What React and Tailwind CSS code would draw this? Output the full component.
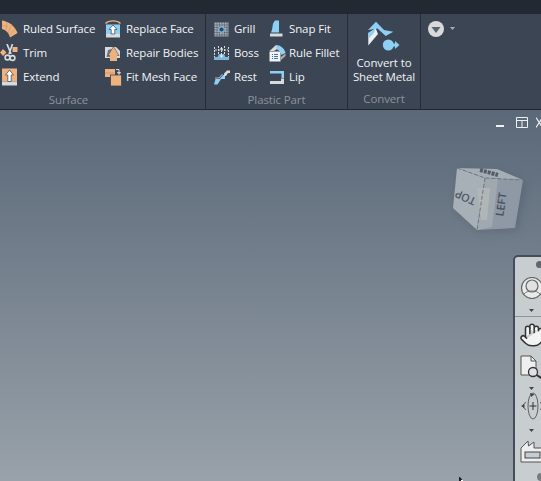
import { Hand } from "lucide-react";

function Item({ icon, label, wide }) {
  return (
    <div className="flex items-center h-6">
      <span className={`${wide ? "w-[23px]" : "w-[21px]"} h-5 shrink-0 flex items-center`}>{icon}</span>
      <span className="whitespace-nowrap">{label}</span>
    </div>
  );
}
function ItemP({ icon, label }) {
  return (
    <div className="flex items-center h-6">
      <span className="w-[20px] h-5 shrink-0 flex items-center">{icon}</span>
      <span className="whitespace-nowrap">{label}</span>
    </div>
  );
}

const O = "#eeb27f";
const B = "#8ed0f5";
const W = "#d8dadc";
const G = "#aab0b5";

const Ruled = () => (
  <svg width="18" height="18" viewBox="0 0 18 18">
    <path d="M2 0.500 C9 1.500 15 6 17.500 13 L10 17.500 C9 13 6 10 2 9 Z" fill={O} />
    <path d="M2 5L8 7M7 2L6 10M12 4L8 13M15 9L10 15" stroke="#c89468" fill="none" strokeWidth="0.6" />
  </svg>
);
const Trim = () => (
  <svg width="18" height="18" viewBox="0 0 18 18">
    <path d="M3 5l3.500 3.500-3.500 3.500-3-3.500z" fill={O} />
    <rect x="12.500" y="3" width="5" height="5" fill={O} />
    <path d="M7 0l4 10M12.500 0L9 10" stroke={W} strokeWidth="1.700" fill="none" />
    <circle cx="7.500" cy="13.500" r="2.400" fill="none" stroke={W} strokeWidth="1.600" />
    <circle cx="12.500" cy="14" r="2.400" fill="none" stroke={W} strokeWidth="1.600" />
  </svg>
);
const Extend = () => (
  <svg width="18" height="18" viewBox="0 0 18 18">
    <rect x="2" y="0.500" width="15" height="13" fill={O} />
    <rect x="2" y="13.500" width="15" height="4" fill={W} />
    <path d="M9.500 2L13.500 7H11.200V13.500H7.800V7H5.500Z" fill="#fff" stroke="#33404f" strokeWidth="0.700" />
  </svg>
);
const Replace = () => (
  <svg width="16" height="18" viewBox="0 0 16 18">
    <path d="M0.500 3.500C4 0 12 0 15.500 3.500" fill="none" stroke={O} strokeWidth="1.400" />
    <rect x="1" y="4.500" width="14" height="9.500" fill={B} />
    <rect x="1" y="14" width="14" height="3.500" fill={W} />
    <path d="M8 5L12 9.500H9.800V14H6.200V9.500H4Z" fill="#fff" stroke="#33404f" strokeWidth="0.700" />
  </svg>
);
const Repair = () => (
  <svg width="16" height="18" viewBox="0 0 16 18">
    <path d="M0 3H11L15 7V14H0Z" fill={W} />
    <path d="M1.500 13L3 6 6 5 8 8 7 13Z" fill="#70777e" />
    <path d="M8.500 2.500L14 11.500H3Z" fill={O} stroke="#4a4f55" strokeWidth="0.600" />
    <rect x="5" y="11" width="7" height="6" fill={O} />
  </svg>
);
const FitMesh = () => (
  <svg width="17" height="18" viewBox="0 0 17 18">
    <rect x="0" y="1" width="10" height="8" fill={O} />
    <path d="M0 5H9" stroke="#b98a62" strokeWidth="0.600" />
    <rect x="5.500" y="7" width="11" height="11" fill={O} stroke="#3c4554" strokeWidth="0.800" />
    <path d="M11 1.500H14V5M12.500 4.500H15.500L14 6.500Z" stroke={W} strokeWidth="1" fill="none" />
  </svg>
);
const Grill = () => (
  <svg width="15" height="15" viewBox="0 0 15 15">
    <rect x="0.500" y="0.500" width="14" height="14" fill={G} />
    <path d="M3 0V15M5.500 0V15M8 0V15M10.500 0V15M13 0V15M0 3H15M0 5.500H15M0 8H15M0 10.500H15M0 13H15" stroke="#59626d" strokeWidth="0.700" />
    <circle cx="7.500" cy="7.500" r="2.800" fill="#3c4554" stroke="#69b7e8" strokeWidth="1.400" />
  </svg>
);
const Boss = () => (
  <svg width="15" height="15" viewBox="0 0 15 15">
    <path d="M0 14V11H3.500L5 8H10L11.500 11H15V14Z" fill="#7fb7d8" />
    <path d="M0.500 1V11M14.500 1V11M4.500 0V8M10.500 0V8M7.500 1V12M1 4H14" stroke={W} strokeWidth="1" strokeDasharray="2 1" fill="none" />
    <path d="M6 3H9M6 10H9" stroke="#fff" strokeWidth="1" />
  </svg>
);
const Rest = () => (
  <svg width="16" height="15" viewBox="0 0 16 15">
    <path d="M0 14.500L1.500 9H5.500L9 5H11V9H7L3.500 14.500Z" fill={B} />
    <path d="M1 8H5L8.500 4" stroke={W} strokeWidth="0.800" fill="none" />
    <path d="M10 3.500L13 0.500H16V3H14L12 6H10Z" fill={W} />
  </svg>
);
const Snap = () => (
  <svg width="15" height="18" viewBox="0 0 15 18">
    <path d="M2 12.500C3.500 9 3.500 6 4 3.500L6 0.500H10V12.500Z" fill={B} />
    <rect x="1" y="13.500" width="12.500" height="3" fill={W} />
  </svg>
);
const Fillet = () => (
  <svg width="17" height="18" viewBox="0 0 17 18">
    <path d="M7 1C11 1 15.500 4 16.500 9L12.500 11C12 8 10 6 7 5Z" fill={B} />
    <path d="M0.500 7L7 1L7.500 5.500L5 7Z" fill={W} />
    <path d="M12 13L16.500 9.500V12L12 16Z" fill={G} />
    <path d="M0.500 7.500H11.500V17.500H0.500Z" fill="#f2f3f4" />
    <path d="M3 10.500H4M5 10.500H9M3 12.500H4M5 12.500H9M3 14.500H4M5 14.500H9" stroke="#3a78b0" />
  </svg>
);
const Lip = () => (
  <svg width="16" height="15" viewBox="0 0 16 15">
    <path d="M1 1H15V8H12.500V3.500H1Z" fill={B} />
    <path d="M1 11H12V8.500H15V14H1Z" fill={W} />
  </svg>
);
const Convert = () => (
  <svg width="32" height="30" viewBox="0 0 32 30" className="shrink-0">
    <path d="M0 9L8 0.700L16 9L25.300 10.700L17.700 15L9.500 7.500Z" fill={B} />
    <path d="M0.300 12L7.700 7.300L10 13L0.300 24.500Z" fill="#eceeef" />
    <path d="M0.300 12L7.700 7.300L6 12L1 17Z" fill={B} />
    <circle cx="20.300" cy="24" r="5.500" fill={B} />
    <path d="M24 22.500H27V20L31.500 24L27 28V25.500H24Z" fill={B} />
  </svg>
);
const Caret = ({ c = "" }) => (
  <svg width="5" height="3" viewBox="0 0 5 3" className={c}><path d="M0 0H5L2.500 3Z" fill="#444" /></svg>
);

export default function App() {
  return (
    <div
      className="relative w-[541px] h-[481px] overflow-hidden flex flex-col text-[11.5px] tracking-[-0.12px] text-[#f1f3f5] bg-[#3c4554]"
      style={{ fontFamily: '"Open Sans", "Noto Sans", sans-serif' }}
    >
      <div className="h-[14px] shrink-0 bg-[#222933]" />
      <div className="h-[96px] shrink-0 flex bg-[#3c4553] border-b border-[#1f2630]">
        <section className="w-[206px] shrink-0 flex flex-col border-r border-[#262d38]">
          <div className="flex flex-1 pt-[3px]">
            <div className="w-[105px] shrink-0 flex flex-col">
              <Item wide icon={<Ruled />} label="Ruled Surface" />
              <Item wide icon={<Trim />} label="Trim" />
              <Item wide icon={<Extend />} label="Extend" />
            </div>
            <div className="flex flex-col">
              <Item icon={<Replace />} label="Replace Face" />
              <Item icon={<Repair />} label="Repair Bodies" />
              <Item icon={<FitMesh />} label="Fit Mesh Face" />
            </div>
          </div>
          <div className="h-[21px] leading-[21px] pr-[68px] text-center text-[#8b929c]">Surface</div>
        </section>
        <section className="w-[142px] shrink-0 flex flex-col border-r border-[#262d38]">
          <div className="flex flex-1 pt-[3px] pl-[8px]">
            <div className="w-[55px] shrink-0 flex flex-col">
              <ItemP icon={<Grill />} label="Grill" />
              <ItemP icon={<Boss />} label="Boss" />
              <ItemP icon={<Rest />} label="Rest" />
            </div>
            <div className="flex flex-col">
              <ItemP icon={<Snap />} label="Snap Fit" />
              <ItemP icon={<Fillet />} label="Rule Fillet" />
              <ItemP icon={<Lip />} label="Lip" />
            </div>
          </div>
          <div className="h-[21px] leading-[21px] text-center text-[#8b929c]">Plastic Part</div>
        </section>
        <section className="w-[73px] shrink-0 flex flex-col items-center border-r border-[#262d38]">
          <div className="h-[74px] shrink-0 flex flex-col items-center pt-[7px]">
            <Convert />
            <div className="text-center leading-[14px] mt-[5px] whitespace-nowrap">Convert to<br />Sheet Metal</div>
          </div>
          <div className="h-[21px] leading-[21px] text-center text-[#8b929c]">Convert</div>
        </section>
        <div className="flex items-start pt-[7px] pl-[7px] gap-[6px]">
          <svg width="16" height="16" viewBox="0 0 16 16">
            <circle cx="8" cy="8" r="8" fill="#d9d9d9" />
            <path d="M3.500 6H12.500L8 12Z" fill="#5b636e" />
          </svg>
          <svg width="5" height="3" viewBox="0 0 5 3" className="mt-[6px]"><path d="M0 0H5L2.500 3Z" fill="#a8adb3" /></svg>
        </div>
      </div>
      <main className="relative flex-1 bg-gradient-to-b from-[#5a6878] to-[#99a2aa]">
        <div className="absolute left-[496px] top-[7px] flex items-start text-[#eef0f2]">
          <span className="w-[8px] h-[2px] bg-[#eef0f2] mt-[8px] mr-[12px]" />
          <svg width="12" height="11" viewBox="0 0 12 11" className="mr-[8px]"><path d="M.5.500H11.500V10.500H.5ZM.5 3.500H11.500M6 3.500V10.500" fill="none" stroke="#eef0f2" /></svg>
          <svg width="7" height="11" viewBox="0 0 7 11"><path d="M0 .5L6.500 10.500M6.500 .5L0 10.500" fill="none" stroke="#eef0f2" strokeWidth="1.200" /></svg>
        </div>
        <svg className="absolute left-[450px] top-[52px]" width="84" height="84" viewBox="0 0 84 84">
          <defs>
            <filter id="cube-shadow" x="-30%" y="-30%" width="160%" height="160%"><feGaussianBlur stdDeviation="4" /></filter>
            <filter id="cube-soft" x="-5%" y="-5%" width="110%" height="110%"><feGaussianBlur stdDeviation="0.500" /></filter>
          </defs>
          <path d="M9 8L49 9 76 20 68 68 30 70 5 48Z" fill="#4e5a69" opacity="0.45" filter="url(#cube-shadow)" />
          <g filter="url(#cube-soft)">
            <path d="M7 6L47 7 73 18 35 16Z" fill="#a5adb5" />
            <path d="M7 6L35 16 27 68 3 46Z" fill="#a7afb7" />
            <path d="M35 16L73 18 65 66 27 68Z" fill="#8f99a5" />
            <path d="M35 16L48 17 42 65 27 68Z" fill="#a0a8b0" />
            <path d="M27 26H40L37 58H31Z" fill="#b0b5b6" />
            <path d="M7 6L35 16 73 18M35 16L27 68" stroke="#6d7782" strokeDasharray="4 2" fill="none" />
            <path d="M30 8L48 13" stroke="#525b66" strokeWidth="4" strokeDasharray="3 1" />
          </g>
          <text transform="translate(17 32) rotate(205)" textAnchor="middle" fontSize="11" fontWeight="600" fill="#4f5965" fontFamily="'Open Sans', sans-serif">TOP</text>
          <text transform="translate(55 43) rotate(-82)" textAnchor="middle" fontSize="11" fontWeight="600" fill="#48525e" fontFamily="'Open Sans', sans-serif">LEFT</text>
        </svg>
        <nav className="absolute left-[513px] top-[145px] w-[40px] h-[340px] rounded-[5px] bg-[#c8cdd0] border-2 border-[#454e58] pl-[5px] flex flex-col items-start overflow-hidden">
          <span className="absolute left-[21px] top-[4px] w-[7px] h-[7px] rounded-full bg-[#5f666d]" />
          <svg className="mt-[20px] shrink-0" width="24" height="22" viewBox="0 0 24 22">
            <circle cx="12" cy="11" r="10.500" fill="#e9eaea" stroke="#666" strokeWidth="1.200" />
            <circle cx="12" cy="9" r="6" fill="#dfe1e2" stroke="#666" strokeWidth="1.200" />
            <path d="M4 17C7 13 17 13 20 17" stroke="#777" fill="none" />
          </svg>
          <Caret c="ml-[9px] mt-[10px] shrink-0" />
          <div className="w-[40px] ml-[-5px] h-px bg-[#8b929a] mt-[4px] shrink-0" />
          <Hand size={26} fill="#f3f3f3" stroke="#333" strokeWidth={1.400} className="mt-[5px] ml-[-1px] shrink-0" />
          <svg className="mt-[7px] shrink-0" width="24" height="24" viewBox="0 0 24 24">
            <path d="M1 1H11L16 6V20H1Z" fill="#efefef" stroke="#555" />
            <path d="M11 1V6H16" fill="none" stroke="#555" />
            <circle cx="13" cy="17" r="4.500" fill="#dfe2e4" stroke="#333" strokeWidth="1.300" />
            <path d="M16.500 20L23 24" stroke="#333" strokeWidth="2" />
          </svg>
          <Caret c="ml-[9px] mt-[8px] shrink-0" />
          <svg className="mt-[1px] shrink-0" width="26" height="30" viewBox="0 0 26 30">
            <path d="M6 11.500C2 13 2 17 6 18.500M20 11.500C24 13 24 17 20 18.500" fill="none" stroke="#555" />
            <ellipse cx="13" cy="15" rx="5" ry="13" fill="none" stroke="#555" strokeWidth="0.900" />
            <path d="M13 11V19M9.500 15H16.500" stroke="#333" />
            <path d="M1 15L4.500 13V17ZM25 14L21 11.500V16.500ZM10 2L14.500 3.500L11 6Z" fill="#444" />
          </svg>
          <Caret c="ml-[9px] mt-[8px] shrink-0" />
          <svg className="mt-[8px] shrink-0" width="26" height="23" viewBox="0 0 26 23">
            <path d="M1 8L8 1 8.500 6 14 2V8H26V22H1Z" fill="#eeeeee" stroke="#555" />
            <rect x="5" y="12" width="15" height="6" fill="#c4cdd4" stroke="#444" />
          </svg>
          <span className="mt-[10px] ml-[17px] w-[8px] h-[8px] rounded-full bg-[#777d83] shrink-0" />
        </nav>
        <svg className="absolute left-[459px] top-[367px]" width="7" height="5" viewBox="0 0 7 5"><path d="M0 0V5H5L1 0Z" fill="#1c2026" /><path d="M2 3H4V5H2Z" fill="#fff" /></svg>
      </main>
    </div>
  );
}
